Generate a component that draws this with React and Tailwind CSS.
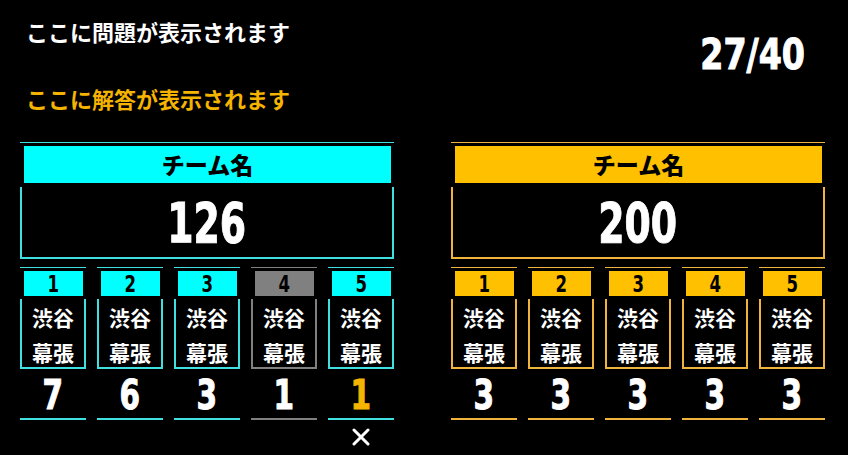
import React from "react";

const jp = { fontFamily: '"Noto Sans CJK JP", "Noto Sans", sans-serif' };
const num = { fontFamily: '"DejaVu Sans Condensed", "Liberation Sans", sans-serif' };

const teams = [
  {
    name: "チーム名",
    score: 126,
    head: "bg-[#00ffff]",
    line: "border-[#40e0e0]",
    under: "bg-[#40e0e0]",
    players: [
      { n: 1, pts: 7 },
      { n: 2, pts: 6 },
      { n: 3, pts: 3 },
      { n: 4, pts: 1, out: true },
      { n: 5, pts: 1, hit: true, miss: true },
    ],
  },
  {
    name: "チーム名",
    score: 200,
    head: "bg-[#ffc000]",
    line: "border-[#f0b43c]",
    under: "bg-[#f0b43c]",
    players: [
      { n: 1, pts: 3 },
      { n: 2, pts: 3 },
      { n: 3, pts: 3 },
      { n: 4, pts: 3 },
      { n: 5, pts: 3 },
    ],
  },
];

function Player({ p, team }) {
  const head = p.out ? "bg-[#808080]" : team.head;
  const line = p.out ? "border-[#808080]" : team.line;
  const under = p.out ? "bg-[#808080]" : team.under;
  return (
    <div className="w-[66px] flex flex-col">
      <div className={`border-t ${line}`} />
      <div className={`${head} mt-[3px] ml-[4px] mr-[3px] h-[25px] flex items-center justify-center text-black text-[23px] font-bold leading-none pt-[1px]`} style={num}>
        <span className="inline-block scale-x-[0.8]">{p.n}</span>
      </div>
      <div className={`mt-[3px] h-[70px] border-x-2 border-b-2 ${line} flex flex-col items-center pt-[1px] text-white text-[21px] font-bold leading-[35px]`} style={jp}>
        <span>渋谷</span>
        <span>幕張</span>
      </div>
      <div className={`h-[49px] flex items-center justify-center text-[41px] font-bold leading-none pt-[4px] [-webkit-text-stroke:1px_currentcolor] ${p.hit ? "text-[#f4b400]" : "text-white"}`} style={num}>
        <span className="inline-block scale-x-[0.8]">{p.pts}</span>
      </div>
      <div className={`h-[2px] ${under}`} />
      {p.miss && (
        <div className="flex justify-center mt-[8px]">
          <svg width="18" height="18" viewBox="0 0 18 18">
            <path d="M2 2 L16 16 M16 2 L2 16" stroke="white" strokeWidth="3" strokeLinecap="round" />
          </svg>
        </div>
      )}
    </div>
  );
}

function Team({ team }) {
  return (
    <div className="w-[374px] flex flex-col">
      <div className={`border-t ${team.line}`} />
      <div className={`${team.head} mt-[3px] ml-[4px] mr-[3px] h-[37px] flex items-center justify-center text-black text-[23px] font-black leading-none`} style={jp}>
        {team.name}
      </div>
      <div className={`mt-[4px] h-[72px] border-x-2 border-b-2 ${team.line} flex items-center justify-center text-white text-[56px] font-bold leading-none pt-[2px] [-webkit-text-stroke:1px_white]`} style={num}>
        <span className="inline-block scale-x-[0.75]">{team.score}</span>
      </div>
      <div className="mt-[8px] flex gap-[11px]">
        {team.players.map((p) => (
          <Player key={p.n} p={p} team={team} />
        ))}
      </div>
    </div>
  );
}

export default function App() {
  return (
    <div className="w-[848px] h-[455px] bg-black overflow-hidden">
      <div className="flex justify-between pl-[26px] pr-[43px]">
        <div className="flex flex-col pt-[17px] font-bold" style={jp}>
          <div className="text-white text-[22px] leading-[28px]">ここに問題が表示されます</div>
          <div className="text-[#f4b400] text-[22px] leading-[28px] mt-[39px]">ここに解答が表示されます</div>
        </div>
        <div className="text-white text-[42px] font-bold leading-none pt-[34px] [-webkit-text-stroke:1px_white]" style={num}>
          <span className="inline-block origin-right scale-x-[0.88]">27/40</span>
        </div>
      </div>
      <div className="flex gap-[57px] pl-[20px] mt-[30px]">
        {teams.map((t, i) => (
          <Team key={i} team={t} />
        ))}
      </div>
    </div>
  );
}
